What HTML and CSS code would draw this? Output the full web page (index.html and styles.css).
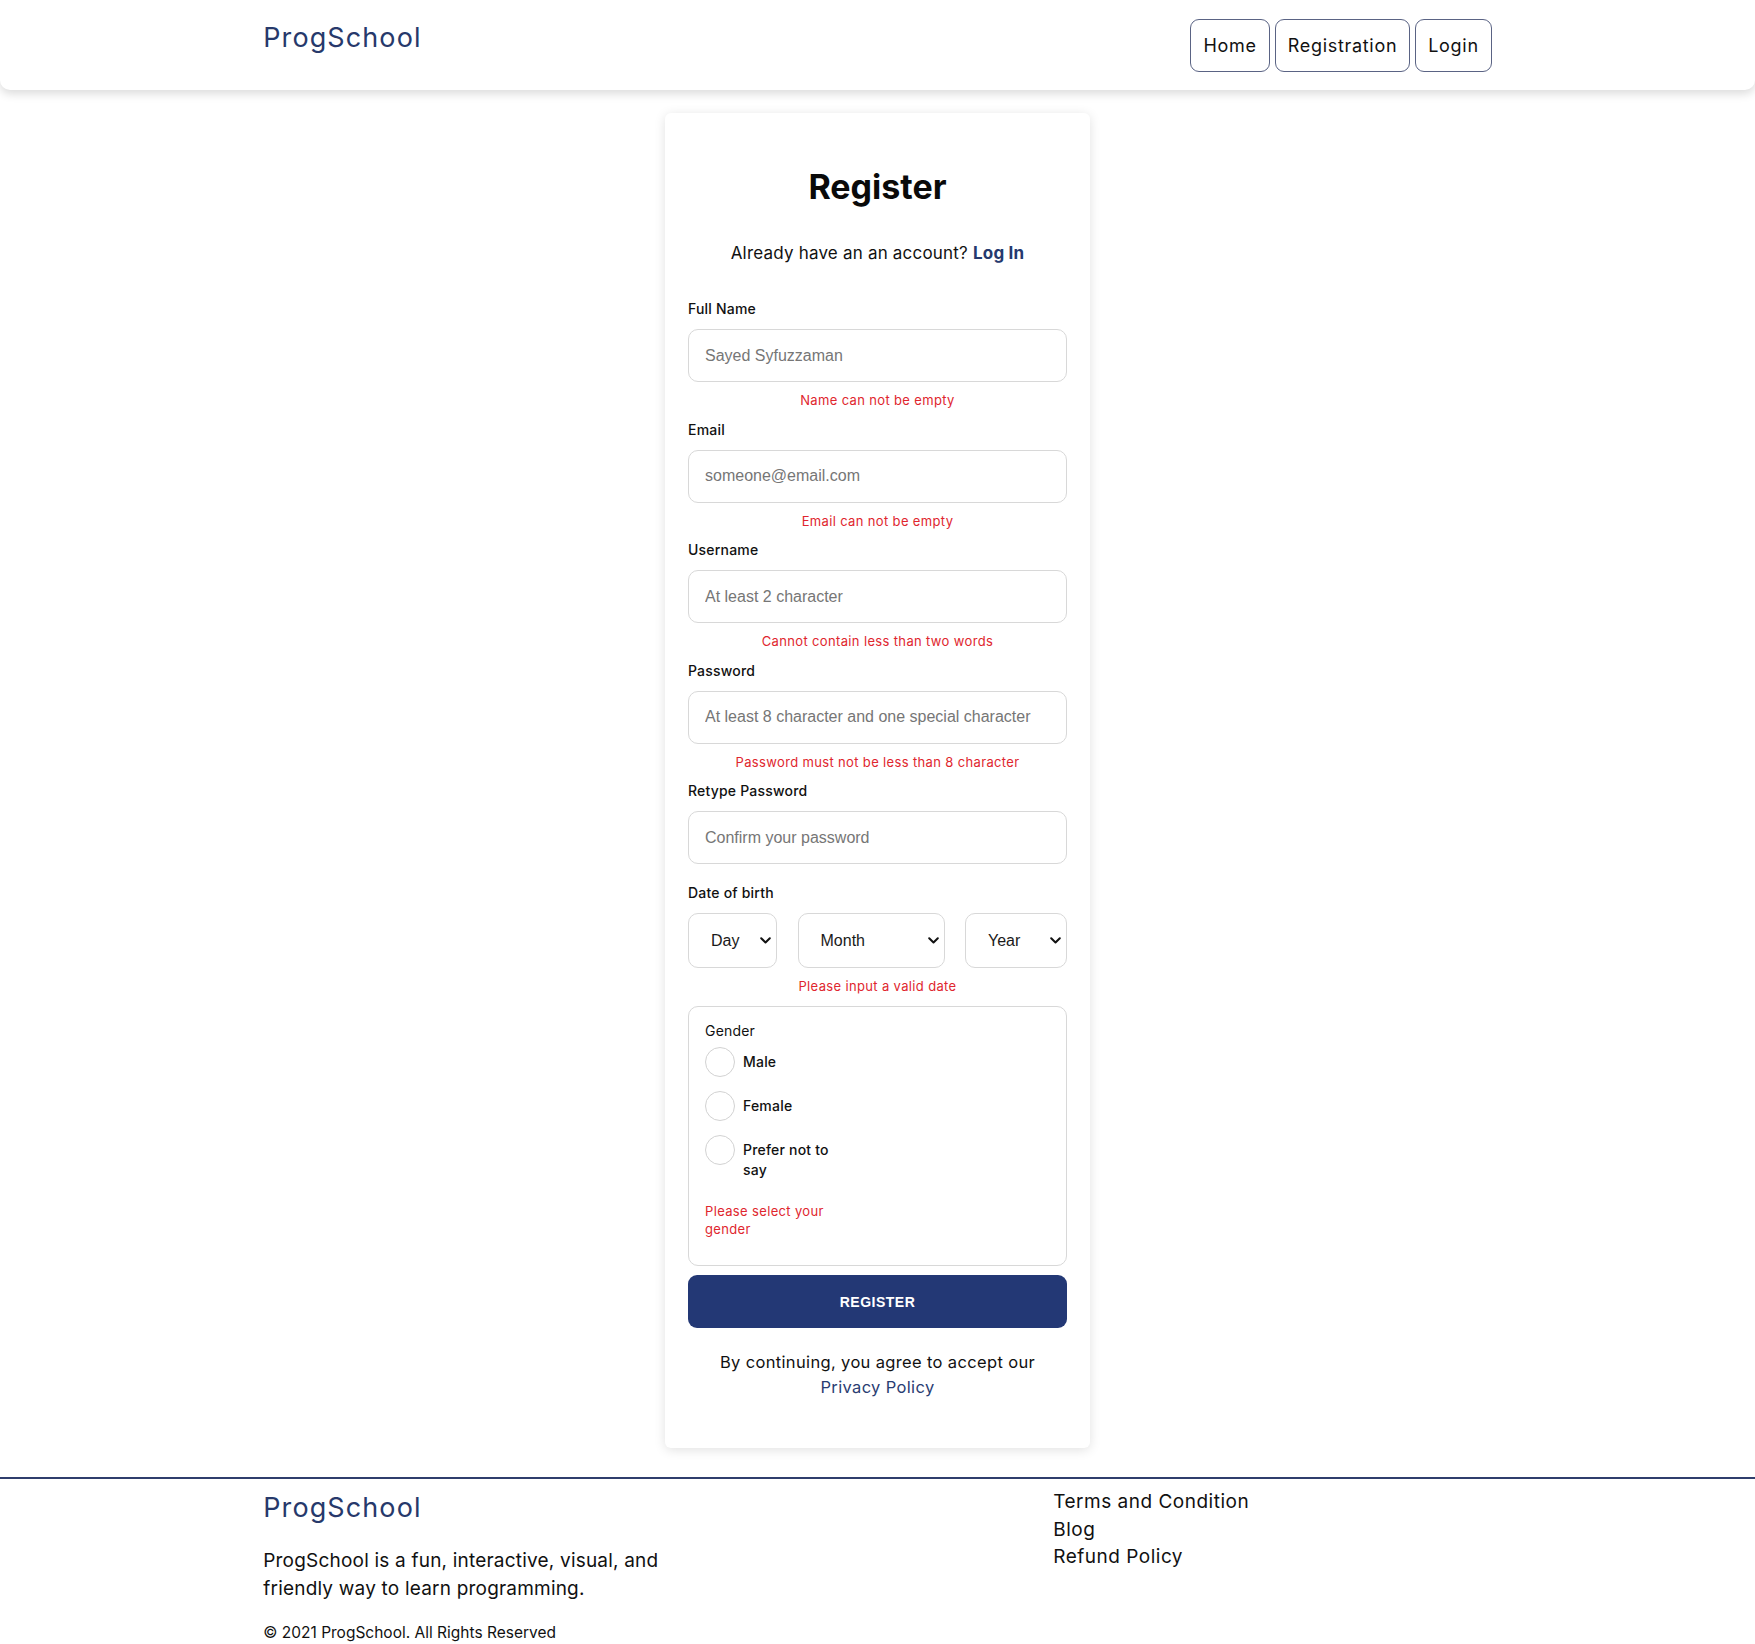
FILE: index.html
```html
<!DOCTYPE html>
<html lang="en">
<head>
<meta charset="utf-8">
<title>ProgSchool - Register</title>
<link rel="stylesheet" href="styles.css">
</head>
<body>
<header class="site-header">
  <div class="container header-inner">
    <a class="logo" href="#">ProgSchool</a>
    <nav class="nav">
      <a class="nav-btn" href="#">Home</a>
      <a class="nav-btn" href="#">Registration</a>
      <a class="nav-btn" href="#">Login</a>
    </nav>
  </div>
</header>

<main class="main">
  <form class="card">
    <h1 class="title">Register</h1>
    <p class="subtitle">Already have an an account? <a href="#" class="login-link">Log In</a></p>

    <div class="field">
      <label class="label">Full Name</label>
      <input class="input" type="text" placeholder="Sayed Syfuzzaman">
      <p class="error">Name can not be empty</p>
    </div>

    <div class="field">
      <label class="label">Email</label>
      <input class="input" type="email" placeholder="someone@email.com">
      <p class="error">Email can not be empty</p>
    </div>

    <div class="field">
      <label class="label">Username</label>
      <input class="input" type="text" placeholder="At least 2 character">
      <p class="error">Cannot contain less than two words</p>
    </div>

    <div class="field">
      <label class="label">Password</label>
      <input class="input" type="password" placeholder="At least 8 character and one special character">
      <p class="error">Password must not be less than 8 character</p>
    </div>

    <div class="field field-noerr">
      <label class="label">Retype Password</label>
      <input class="input" type="password" placeholder="Confirm your password">
    </div>

    <div class="field">
      <label class="label">Date of birth</label>
      <div class="dob">
        <div class="select-wrap sel-day">
          <select class="select"><option>Day</option></select>
          <svg class="chev" width="11" height="7" viewBox="0 0 11 7"><path d="M1.2 1.2 L5.5 5.5 L9.8 1.2" fill="none" stroke="#111" stroke-width="2" stroke-linecap="round" stroke-linejoin="round"/></svg>
        </div>
        <div class="select-wrap sel-month">
          <select class="select"><option>Month</option></select>
          <svg class="chev" width="11" height="7" viewBox="0 0 11 7"><path d="M1.2 1.2 L5.5 5.5 L9.8 1.2" fill="none" stroke="#111" stroke-width="2" stroke-linecap="round" stroke-linejoin="round"/></svg>
        </div>
        <div class="select-wrap sel-year">
          <select class="select"><option>Year</option></select>
          <svg class="chev" width="11" height="7" viewBox="0 0 11 7"><path d="M1.2 1.2 L5.5 5.5 L9.8 1.2" fill="none" stroke="#111" stroke-width="2" stroke-linecap="round" stroke-linejoin="round"/></svg>
        </div>
      </div>
      <p class="error">Please input a valid date</p>
    </div>

    <fieldset class="gender-box">
      <div class="gender-col">
        <div class="gender-title">Gender</div>
        <label class="radio-row"><input class="radio" type="radio" name="g"><span class="radio-text">Male</span></label>
        <label class="radio-row"><input class="radio" type="radio" name="g"><span class="radio-text">Female</span></label>
        <label class="radio-row"><input class="radio" type="radio" name="g"><span class="radio-text">Prefer not to say</span></label>
        <p class="error error-left">Please select your gender</p>
      </div>
    </fieldset>

    <button class="submit" type="button">REGISTER</button>

    <p class="terms">By continuing, you agree to accept our <a href="#" class="policy">Privacy Policy</a></p>
  </form>
</main>

<footer class="site-footer">
  <div class="container footer-inner">
    <div class="footer-left">
      <a class="logo footer-logo" href="#">ProgSchool</a>
      <p class="footer-desc">ProgSchool is a fun, interactive, visual, and friendly way to learn programming.</p>
      <p class="copyright">© 2021 ProgSchool. All Rights Reserved</p>
    </div>
    <ul class="footer-links">
      <li><a href="#">Terms and Condition</a></li>
      <li><a href="#">Blog</a></li>
      <li><a href="#">Refund Policy</a></li>
    </ul>
  </div>
</footer>
</body>
</html>
```

FILE: styles.css
```css
* { box-sizing: border-box; }

html, body {
  margin: 0;
  padding: 0;
  background: #fff;
}

body {
  font-family: Inter, "Noto Sans", "DejaVu Sans", sans-serif;
  color: #111;
}

a { text-decoration: none; color: inherit; }

.container {
  width: 70%;
  margin: 0 auto;
}

/* Header */
.site-header {
  height: 90px;
  background: #fff;
  border-radius: 0 0 10px 10px;
  box-shadow: 0 4px 10px rgba(0, 0, 0, 0.14);
}

.header-inner {
  display: flex;
  justify-content: space-between;
  align-items: flex-start;
}

.logo {
  display: block;
  font-size: 27px;
  line-height: 32px;
  letter-spacing: 1.1px;
  color: #27396b;
  margin-top: 22px;
}

.nav {
  display: flex;
  gap: 5px;
  margin-top: 19px;
}

.nav-btn {
  display: flex;
  align-items: center;
  height: 53px;
  padding: 0 12px;
  border: 1px solid #5a6384;
  border-radius: 9px;
  font-size: 18px;
  letter-spacing: 0.7px;
  color: #111;
  background: #fff;
}

/* Card */
.main {
  padding-top: 23px;
}

.card {
  width: 425px;
  margin: 0 auto;
  padding: 54px 23px 48px;
  background: #fff;
  border-radius: 6px;
  box-shadow: 0 2px 12px rgba(0, 0, 0, 0.12);
}

.title {
  margin: 0;
  font-size: 34px;
  line-height: 40px;
  font-weight: 700;
  text-align: center;
  color: #0a0a0a;
}

.subtitle {
  margin: 34px 0 0;
  font-size: 17px;
  line-height: 24px;
  text-align: center;
  letter-spacing: 0.2px;
}

.login-link {
  font-weight: 700;
  color: #25396e;
}

.field {
  display: flex;
  flex-direction: column;
  margin-top: 34px;
}

.field + .field { margin-top: 10.5px; }
.field-noerr { margin-bottom: 19px; }
.field-noerr + .field { margin-top: 0; }

.label {
  font-size: 14px;
  line-height: 20px;
  font-weight: 500;
  letter-spacing: 0.2px;
  color: #111;
}

.input {
  margin-top: 10px;
  height: 53px;
  width: 100%;
  padding: 0 16px;
  border: 1px solid #d8d8d8;
  border-radius: 10px;
  font-family: "Liberation Sans", Arial, sans-serif;
  font-size: 16px;
  color: #111;
  background: #fff;
  outline: none;
}

.input::placeholder { color: #767676; }

.error {
  margin: 9px 0 0;
  font-size: 13px;
  line-height: 18px;
  color: #e0262e;
  text-align: center;
  letter-spacing: 0.35px;
}

/* Date of birth */
.dob {
  margin-top: 10px;
  display: flex;
  justify-content: space-between;
}

.select-wrap {
  position: relative;
  height: 55px;
}

.sel-day { width: 89px; }
.sel-month { width: 147px; }
.sel-year { width: 102px; }

.select {
  appearance: none;
  -webkit-appearance: none;
  width: 100%;
  height: 100%;
  padding: 0 0 0 22px;
  border: 1px solid #d8d8d8;
  border-radius: 10px;
  background: #fff;
  font-family: "Liberation Sans", Arial, sans-serif;
  font-size: 16px;
  color: #1a1a1a;
  outline: none;
}

.chev {
  position: absolute;
  right: 6px;
  top: 24px;
  pointer-events: none;
}

/* Gender */
.gender-box {
  margin: 11px 0 0;
  padding: 14px 16px 27px;
  border: 1px solid #d8d8d8;
  border-radius: 10px;
  min-width: 0;
}

.gender-col {
  width: 130px;
}

.gender-title {
  font-size: 14px;
  line-height: 20px;
  letter-spacing: 0.2px;
  color: #111;
}

.radio-row {
  display: flex;
  align-items: flex-start;
  gap: 8px;
  margin-top: 14px;
}

.gender-title + .radio-row { margin-top: 6px; }

.radio {
  appearance: none;
  -webkit-appearance: none;
  flex: 0 0 30px;
  width: 30px;
  height: 30px;
  margin: 0;
  border: 1px solid #d2d2d2;
  border-radius: 50%;
  background: #fff;
}

.radio-text {
  padding-top: 5px;
  font-size: 14px;
  line-height: 20px;
  font-weight: 500;
  letter-spacing: 0.2px;
  color: #111;
}

.error-left {
  text-align: left;
  margin-top: 22px;
}

/* Submit */
.submit {
  display: block;
  width: 100%;
  height: 53px;
  margin-top: 9px;
  border: none;
  border-radius: 9px;
  background: #233875;
  color: #fff;
  font-family: "Liberation Sans", Arial, sans-serif;
  font-size: 14px;
  font-weight: 700;
  letter-spacing: 0.5px;
}

.terms {
  margin: 22px 0 0;
  font-size: 16.5px;
  line-height: 25px;
  text-align: center;
  letter-spacing: 0.35px;
  padding: 0 10px;
}

.policy {
  color: #2a3d72;
}

/* Footer */
.site-footer {
  margin-top: 29px;
  border-top: 2px solid #2f3e6c;
  padding-bottom: 2px;
}

.footer-inner {
  display: flex;
}

.footer-left {
  width: 790px;
  padding-top: 13px;
}

.footer-logo {
  margin-top: 0;
}

.footer-desc {
  margin: 23px 0 0;
  width: 420px;
  font-size: 19px;
  line-height: 28px;
  letter-spacing: 0.2px;
}

.copyright {
  margin: 20px 0 0;
  font-size: 15.5px;
  line-height: 20px;
}

.footer-links {
  list-style: none;
  margin: 0;
  padding: 9px 0 0;
  font-size: 19px;
  line-height: 27.5px;
  letter-spacing: 0.5px;
}
```
